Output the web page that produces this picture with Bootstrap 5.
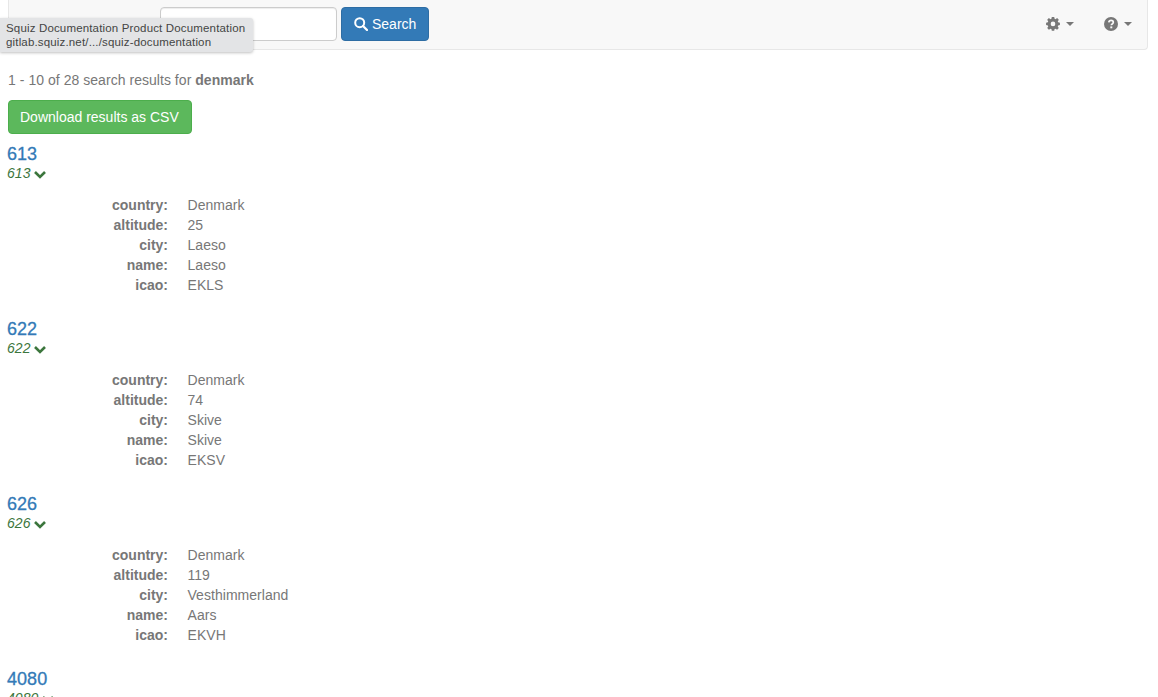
<!DOCTYPE html>
<html lang="en">
<head>
<meta charset="utf-8">
<title>Search results</title>
<link href="https://cdn.jsdelivr.net/npm/bootstrap@5.3.0/dist/css/bootstrap.min.css" rel="stylesheet">
<style>
html,body{height:697px;overflow:hidden}
body{font-family:"Liberation Sans",Arial,sans-serif;font-size:14px;line-height:20px;color:#777;background:#fff;padding:0 10px 0 8px;position:relative;letter-spacing:.04px}
.topbar{height:50px;background:#f8f8f8;border:1px solid #e7e7e7;border-top:0;border-radius:0 0 4px 4px;padding:7px 15px 0 0}
.brandish{width:151px;color:#777;font-size:18px;padding:8px 0 0 18px;white-space:nowrap;letter-spacing:0}
.qbox{width:177px;height:34px;border:1px solid #ccc;border-radius:4px;padding:6px 12px;font-size:14px;color:#555;background:#fff;box-shadow:inset 0 1px 1px rgba(0,0,0,.075);margin-right:4px}
.qbtn{height:34px;padding:0 12px;background:#337ab7;border:1px solid #2e6da4;border-radius:4px;color:#fff;font-size:14px;line-height:32px;display:flex;align-items:center;gap:4px;letter-spacing:0}
.toolgroup{gap:30px}
.toolitem{color:#777;display:flex;align-items:center;gap:6px;height:34px}
.toolitem svg{display:block}
.caretish{width:0;height:0;border-top:4px solid #777;border-left:4px solid transparent;border-right:4px solid transparent}
.tipbox{position:absolute;left:0;top:18px;width:253px;height:34px;background:#e3e4e6;border-radius:0 3px 3px 0;box-shadow:0 1px 3px rgba(0,0,0,.25);font-size:11.500px;line-height:14px;color:#444;padding:3px 6px;letter-spacing:.16px;white-space:nowrap}
.summary{margin:20px 0 0;height:20px}
.summary b{color:#777}
.csvbtn{display:inline-block;margin-top:10px;height:34px;padding:0 12px 0 11px;background:#5cb85c;border:1px solid #4cae4c;border-radius:4px;color:#fff;line-height:32px;font-size:14px;text-decoration:none;letter-spacing:0}
.hitlist{margin-top:10px;margin-left:-1px}
.hit{height:175px}
.hit-title{font-size:18px;line-height:20px;font-weight:400;margin:0;color:#337ab7;display:block;text-decoration:none;-webkit-text-stroke:.3px #337ab7}
.hit-sub{font-style:italic;color:#3c763d;line-height:20px;height:20px;display:flex;align-items:center;gap:4px;margin-top:-1px}
.hit-sub svg{margin-top:2px}
.facts{margin:12px 0 0}
.factrow{display:flex;height:20px;margin:0}
.factrow dt{width:161px;text-align:right;font-weight:700;color:#777;margin:0;flex:none;letter-spacing:0}
.factrow dd{margin:0 0 0 19.500px;color:#777}
</style>
</head>
<body>
<nav class="topbar d-flex align-items-start">
  <div class="brandish">SS</div>
  <input class="qbox" type="text" value="denmark" aria-label="Search">
  <button class="qbtn" type="button">
    <svg width="14" height="14" viewBox="0 0 14 14" fill="none" stroke="#fff" stroke-width="2"><circle cx="5.700" cy="5.700" r="4.500"/><path d="M9 9l4 4" stroke-linecap="round" stroke-width="2.300"/></svg>
    Search
  </button>
  <div class="ms-auto d-flex toolgroup">
    <a class="toolitem" href="#" aria-label="Settings">
      <svg width="14" height="14" viewBox="-0.5 0 15 15"><path fill="#777" fill-rule="evenodd" d="M5.700 0h2.600l.4 1.900 1 .4L11.400 1.200l1.800 1.800-1.100 1.700.4 1 1.900.4v2.600l-1.900.4-.4 1 1.100 1.700-1.800 1.800-1.700-1.100-1 .4-.4 1.900H5.700l-.4-1.900-1-.4-1.700 1.100L.8 11.800l1.100-1.700-.4-1L-.4 8.700V6.100l1.900-.4.4-1L.8 3l1.800-1.800 1.700 1.100 1-.4zM7 4.900a2.500 2.500 0 1 0 0 5 2.500 2.500 0 0 0 0-5z"/></svg>
      <span class="caretish"></span>
    </a>
    <a class="toolitem" href="#" aria-label="Help">
      <svg width="14" height="14" viewBox="0 0 14 14"><circle cx="7" cy="7" r="7" fill="#777"/><path d="M4.800 5.300C5 3.900 6 3.400 7.100 3.400c1.300 0 2.200.8 2.200 1.900 0 1.700-2 1.600-2 3" fill="none" stroke="#f8f8f8" stroke-width="1.700"/><rect x="6.300" y="9.400" width="2" height="1.900" fill="#f8f8f8"/></svg>
      <span class="caretish"></span>
    </a>
  </div>
</nav>
<div class="tipbox">Squiz Documentation Product Documentation<br>gitlab.squiz.net/.../squiz-documentation</div>

<p class="summary">1 - 10 of 28 search results for <b>denmark</b></p>
<a class="csvbtn" href="#">Download results as CSV</a>

<div class="hitlist">
  <section class="hit">
    <a class="hit-title" href="#">613</a>
    <div class="hit-sub">613 <svg width="12" height="9" viewBox="0 0 12 9" fill="none" stroke="#3c763d" stroke-width="2.600"><path d="M1 2l5 5 5-5"/></svg></div>
    <dl class="facts">
      <div class="factrow"><dt>country:</dt><dd>Denmark</dd></div>
      <div class="factrow"><dt>altitude:</dt><dd>25</dd></div>
      <div class="factrow"><dt>city:</dt><dd>Laeso</dd></div>
      <div class="factrow"><dt>name:</dt><dd>Laeso</dd></div>
      <div class="factrow"><dt>icao:</dt><dd>EKLS</dd></div>
    </dl>
  </section>
  <section class="hit">
    <a class="hit-title" href="#">622</a>
    <div class="hit-sub">622 <svg width="12" height="9" viewBox="0 0 12 9" fill="none" stroke="#3c763d" stroke-width="2.600"><path d="M1 2l5 5 5-5"/></svg></div>
    <dl class="facts">
      <div class="factrow"><dt>country:</dt><dd>Denmark</dd></div>
      <div class="factrow"><dt>altitude:</dt><dd>74</dd></div>
      <div class="factrow"><dt>city:</dt><dd>Skive</dd></div>
      <div class="factrow"><dt>name:</dt><dd>Skive</dd></div>
      <div class="factrow"><dt>icao:</dt><dd>EKSV</dd></div>
    </dl>
  </section>
  <section class="hit">
    <a class="hit-title" href="#">626</a>
    <div class="hit-sub">626 <svg width="12" height="9" viewBox="0 0 12 9" fill="none" stroke="#3c763d" stroke-width="2.600"><path d="M1 2l5 5 5-5"/></svg></div>
    <dl class="facts">
      <div class="factrow"><dt>country:</dt><dd>Denmark</dd></div>
      <div class="factrow"><dt>altitude:</dt><dd>119</dd></div>
      <div class="factrow"><dt>city:</dt><dd>Vesthimmerland</dd></div>
      <div class="factrow"><dt>name:</dt><dd>Aars</dd></div>
      <div class="factrow"><dt>icao:</dt><dd>EKVH</dd></div>
    </dl>
  </section>
  <section class="hit">
    <a class="hit-title" href="#">4080</a>
    <div class="hit-sub">4080 <svg width="12" height="9" viewBox="0 0 12 9" fill="none" stroke="#3c763d" stroke-width="2.600"><path d="M1 2l5 5 5-5"/></svg></div>
  </section>
</div>
<script src="https://cdn.jsdelivr.net/npm/bootstrap@5.3.0/dist/js/bootstrap.bundle.min.js"></script>
</body>
</html>
